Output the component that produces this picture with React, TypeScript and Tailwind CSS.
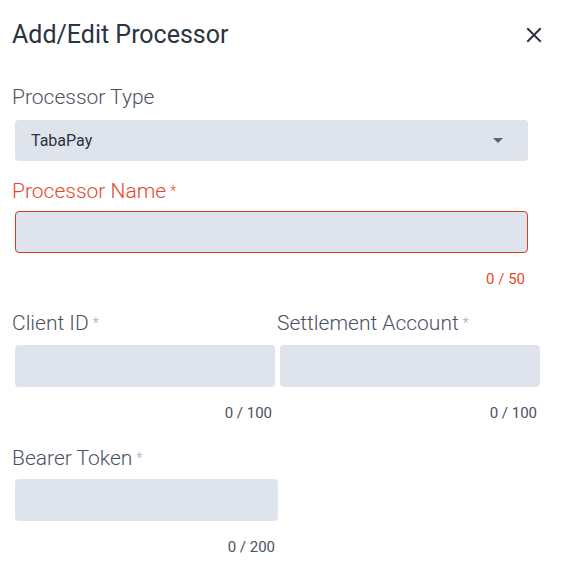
import React, { useState } from 'react';

type FieldProps = {
  label: string;
  required?: boolean;
  error?: boolean;
  max?: number;
  value: string;
  onChange: (v: string) => void;
  width: string;
  labelGap: string;
};

const Field: React.FC<FieldProps> = ({ label, required, error, max, value, onChange, width, labelGap }) => {
  return (
    <div className="flex flex-col">
      <label className={`text-[21px] font-light leading-[28px] ${error ? 'text-[#e5482c]' : 'text-[#4a5263]'}`}>
        {label}
        {required && (
          <span className={`ml-[4px] align-top text-[14px] ${error ? 'text-[#e5482c]' : 'text-[#a0a5b0]'}`}>*</span>
        )}
      </label>
      <input
        className={`${labelGap} ${width} ml-[3px] h-[42px] rounded-[4px] bg-[#dfe3ec] px-[14px] text-[16px] text-[#2d3442] outline-none ${
          error ? 'border border-[#dc3a1e]' : 'border border-transparent'
        }`}
        value={value}
        maxLength={max}
        onChange={e => onChange(e.target.value)}
      />
      {max !== undefined && (
        <div
          className={`${width} ml-[3px] mt-[16px] pr-[3px] text-right text-[15px] leading-[20px] ${
            error ? 'text-[#e5482c]' : 'text-[#4a5263]'
          }`}
        >
          {value.length} / {max}
        </div>
      )}
    </div>
  );
};

export default function App() {
  const [name, setName] = useState('');
  const [clientId, setClientId] = useState('');
  const [account, setAccount] = useState('');
  const [token, setToken] = useState('');

  return (
    <div className="min-h-screen w-[564px] bg-white pl-[12px] font-['Roboto',sans-serif]">
      {/* header */}
      <div className="flex items-center justify-between pr-[20px] pt-[19px]">
        <h2 className="text-[25px] font-normal leading-[32px] text-[#2b3340]">Add/Edit Processor</h2>
        <button className="flex h-[20px] w-[20px] items-center justify-center text-[#2b3340]">
          <svg width="16" height="16" viewBox="0 0 16 16" fill="none" stroke="currentColor" strokeWidth="2" strokeLinecap="square">
            <path d="M2 2L14 14M14 2L2 14" />
          </svg>
        </button>
      </div>

      {/* processor type */}
      <div className="mt-[32px] flex flex-col">
        <label className="text-[21px] font-light leading-[28px] text-[#4a5263]">Processor Type</label>
        <button className="ml-[3px] mt-[9px] flex h-[41px] w-[513px] items-center justify-between rounded-[4px] bg-[#dfe3ec] pl-[16px] pr-[25px] text-[16px] text-[#2d3442]">
          <span>TabaPay</span>
          <svg width="10" height="5" viewBox="0 0 10 5" fill="#5d6370">
            <path d="M0 0L10 0L5 5Z" />
          </svg>
        </button>
      </div>

      <div className="mt-[16px]">
        <Field label="Processor Name" required error max={50} value={name} onChange={setName} width="w-[513px]" labelGap="mt-[6px]" />
      </div>

      <div className="mt-[20px] grid w-[530px] grid-cols-[263px_263px] gap-x-[2px]">
        <Field label="Client ID" required max={100} value={clientId} onChange={setClientId} width="w-[260px]" labelGap="mt-[8px]" />
        <Field label="Settlement Account" required max={100} value={account} onChange={setAccount} width="w-[260px]" labelGap="mt-[8px]" />
      </div>

      <div className="mt-[21px]">
        <Field label="Bearer Token" required max={200} value={token} onChange={setToken} width="w-[263px]" labelGap="mt-[7px]" />
      </div>
    </div>
  );
}
